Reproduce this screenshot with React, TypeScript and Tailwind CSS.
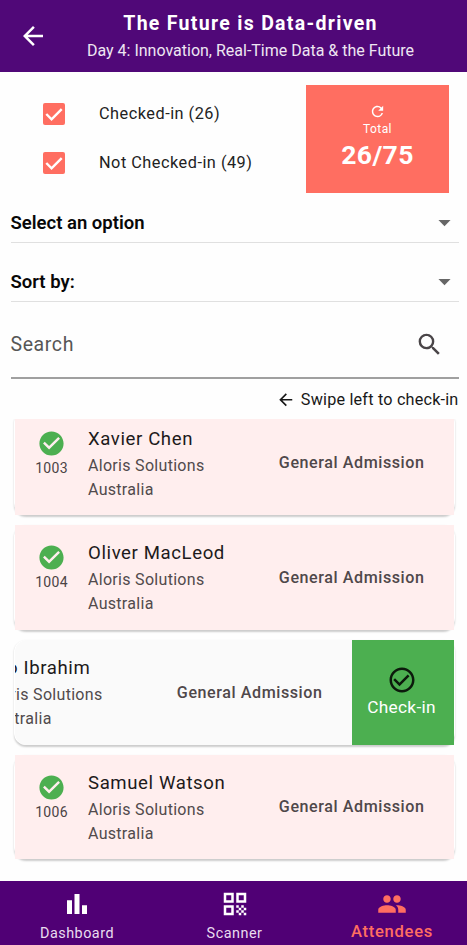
import React from 'react'
import {
  MdArrowBack,
  MdArrowDropDown,
  MdCheckCircle,
  MdCheckCircleOutline,
  MdPeople,
  MdQrCode,
  MdRefresh,
  MdSearch,
} from 'react-icons/md'

interface Attendee {
  id: string
  name: string
  company: string
  country: string
  ticket: string
  checkedIn: boolean
}

const attendees: Attendee[] = [
  { id: '1003', name: 'Xavier Chen', company: 'Aloris Solutions', country: 'Australia', ticket: 'General Admission', checkedIn: true },
  { id: '1004', name: 'Oliver MacLeod', company: 'Aloris Solutions', country: 'Australia', ticket: 'General Admission', checkedIn: true },
  { id: '1005', name: 'Leo Ibrahim', company: 'Aloris Solutions', country: 'Australia', ticket: 'General Admission', checkedIn: false },
  { id: '1006', name: 'Samuel Watson', company: 'Aloris Solutions', country: 'Australia', ticket: 'General Admission', checkedIn: true },
]

const Header: React.FC = () => (
  <header className="flex h-[72px] shrink-0 bg-[#500878] text-white">
    <div className="flex w-[66px] items-center justify-center">
      <MdArrowBack className="h-[30px] w-[30px]" />
    </div>
    <div className="flex w-[369px] flex-col items-center whitespace-nowrap pt-3">
      <h1 className="text-[19.5px] font-bold leading-6 tracking-[1.3px]">The Future is Data-driven</h1>
      <p className="mt-[3px] text-[16px] leading-6 text-[#eee6f2]">Day 4: Innovation, Real-Time Data &amp; the Future</p>
    </div>
  </header>
)

const FilterRow: React.FC<{ label: string }> = ({ label }) => (
  <label className="flex h-[49px] shrink-0 items-center">
    <span className="flex h-[22px] w-[22px] items-center justify-center rounded-[2px] bg-[#ff6e61]">
      <svg viewBox="0 0 18 18" className="h-[22px] w-[22px]" fill="none" stroke="#fff" strokeWidth="2">
        <path d="M2.7 9 7 13.3 15.3 5" />
      </svg>
    </span>
    <span className="ml-[34px] whitespace-nowrap pt-px text-[16.3px] tracking-[0.5px] text-[#222]">{label}</span>
  </label>
)

const SelectRow: React.FC<{ label: string }> = ({ label }) => (
  <div className="flex h-[59px] items-center justify-between border-b-[1.5px] border-[#e0e0e0] pt-[19px]">
    <span className="pt-[2px] text-[18.5px] font-semibold text-[#080808]">{label}</span>
    <MdArrowDropDown className="h-[29px] w-[29px] text-[#666]" />
  </div>
)

const AttendeeContent: React.FC<{ attendee: Attendee }> = ({ attendee }) => (
  <div className="flex h-full w-[439px] shrink-0 whitespace-nowrap">
    <div className="flex w-[73px] flex-col items-center pt-[18px]">
      <MdCheckCircle className={attendee.checkedIn ? 'h-[29px] w-[29px] text-[#4caf50]' : 'h-[29px] w-[29px] text-gray-400'} />
      <span className="text-[14px] leading-5 tracking-[0.3px] text-[#4b4345]">{attendee.id}</span>
    </div>
    <div className="flex flex-1 flex-col pt-4">
      <span className="text-[18.6px] leading-6 tracking-[0.6px] text-[#1d1a1b]">{attendee.name}</span>
      <span className="mt-[3px] text-[16px] leading-6 tracking-[0.3px] text-[#514a4c]">{attendee.company}</span>
      <span className="text-[16px] leading-[23px] tracking-[0.3px] text-[#514a4c]">{attendee.country}</span>
    </div>
    <span className="self-center pr-[29.5px] pt-px text-[16.1px] font-medium tracking-[0.57px] text-[#4f484a]">{attendee.ticket}</span>
  </div>
)

const AttendeeCard: React.FC<{ attendee: Attendee }> = ({ attendee }) => (
  <div className="h-[104.7px] shrink-0 rounded-[12px] bg-white px-px shadow-[0_1.5px_2px_rgba(0,0,0,0.2)]">
    {attendee.checkedIn ? (
      <div className="h-full bg-[#ffeeee]">
        <AttendeeContent attendee={attendee} />
      </div>
    ) : (
      <div className="flex h-full justify-end overflow-hidden rounded-l-[12px] bg-[#fafafa]">
        <AttendeeContent attendee={attendee} />
        <button className="flex w-[102px] shrink-0 flex-col items-center bg-[#4caf50] pt-[25px]">
          <MdCheckCircleOutline className="-ml-[3px] h-[30px] w-[30px] text-[#0c1a0c]" />
          <span className="-ml-[3px] text-[17.3px] leading-6 tracking-[0.3px] text-white">Check-in</span>
        </button>
      </div>
    )}
  </div>
)

const BottomNav: React.FC = () => (
  <nav className="grid h-[64.5px] shrink-0 grid-cols-[154px_161px_154px] bg-[#500075] text-[14.4px] tracking-[0.5px] text-[#e9dcef]">
    <div className="flex flex-col items-center pt-2">
      <svg viewBox="0 0 24 24" className="h-[30px] w-[30px] fill-white">
        <path d="M4 9h4v11H4zm12 4h4v7h-4zm-6-9h4v16h-4z" />
      </svg>
      <span className="mt-[5px] leading-5">Dashboard</span>
    </div>
    <div className="flex flex-col items-center pt-2">
      <MdQrCode className="h-[30px] w-[30px] text-white" />
      <span className="mt-[5px] leading-5">Scanner</span>
    </div>
    <div className="flex flex-col items-center pt-2 text-[#ff6e61]">
      <MdPeople className="h-[30px] w-[30px]" />
      <span className="mt-[3px] text-[16.6px] font-medium leading-5 tracking-[0.7px]">Attendees</span>
    </div>
  </nav>
)

export default function App() {
  return (
    <div className="flex h-[945px] w-[467px] flex-col overflow-hidden bg-[#fefefe] font-['Roboto',sans-serif]">
      <Header />

      {/* Status filters + total */}
      <section className="flex h-[112px] shrink-0 justify-between pl-[43px] pr-[18px] pt-[13px]">
        <div className="flex flex-col pt-[4px]">
          <FilterRow label="Checked-in (26)" />
          <FilterRow label="Not Checked-in (49)" />
        </div>
        <div className="flex h-[108px] w-[143px] flex-col items-center bg-[#ff6e61] pt-[18px] text-white">
          <MdRefresh className="h-[17px] w-[17px]" />
          <span className="mt-px text-[12px] leading-4 tracking-[0.4px]">Total</span>
          <span className="mt-[2px] text-[26.5px] font-bold leading-8 tracking-[0.4px]">26/75</span>
        </div>
      </section>

      <section className="flex shrink-0 flex-col pl-[10.5px] pr-[8.5px]">
        <SelectRow label="Select an option" />
        <SelectRow label="Sort by:" />
        <div className="flex h-[77px] items-center justify-between border-b-2 border-[#a0a0a0] pr-[15px] pt-[10px]">
          <span className="pt-px text-[19.5px] tracking-[0.6px] text-[#565656]">Search</span>
          <MdSearch className="h-[29px] w-[29px] text-[#4a4548]" />
        </div>
        <div className="flex h-[40px] items-center justify-end gap-[5px] pt-[2px] text-[#181818]">
          <MdArrowBack className="h-[19.5px] w-[19.5px]" />
          <span className="text-[16.2px] tracking-[0.2px]">Swipe left to check-in</span>
        </div>
      </section>

      <main className="min-h-0 flex-1 overflow-hidden pl-3.5 pr-3">
        <div className="-mt-[8.5px] flex flex-col gap-2.5">
          {attendees.map(attendee => (
            <AttendeeCard key={attendee.id} attendee={attendee} />
          ))}
        </div>
      </main>

      <BottomNav />
    </div>
  )
}
